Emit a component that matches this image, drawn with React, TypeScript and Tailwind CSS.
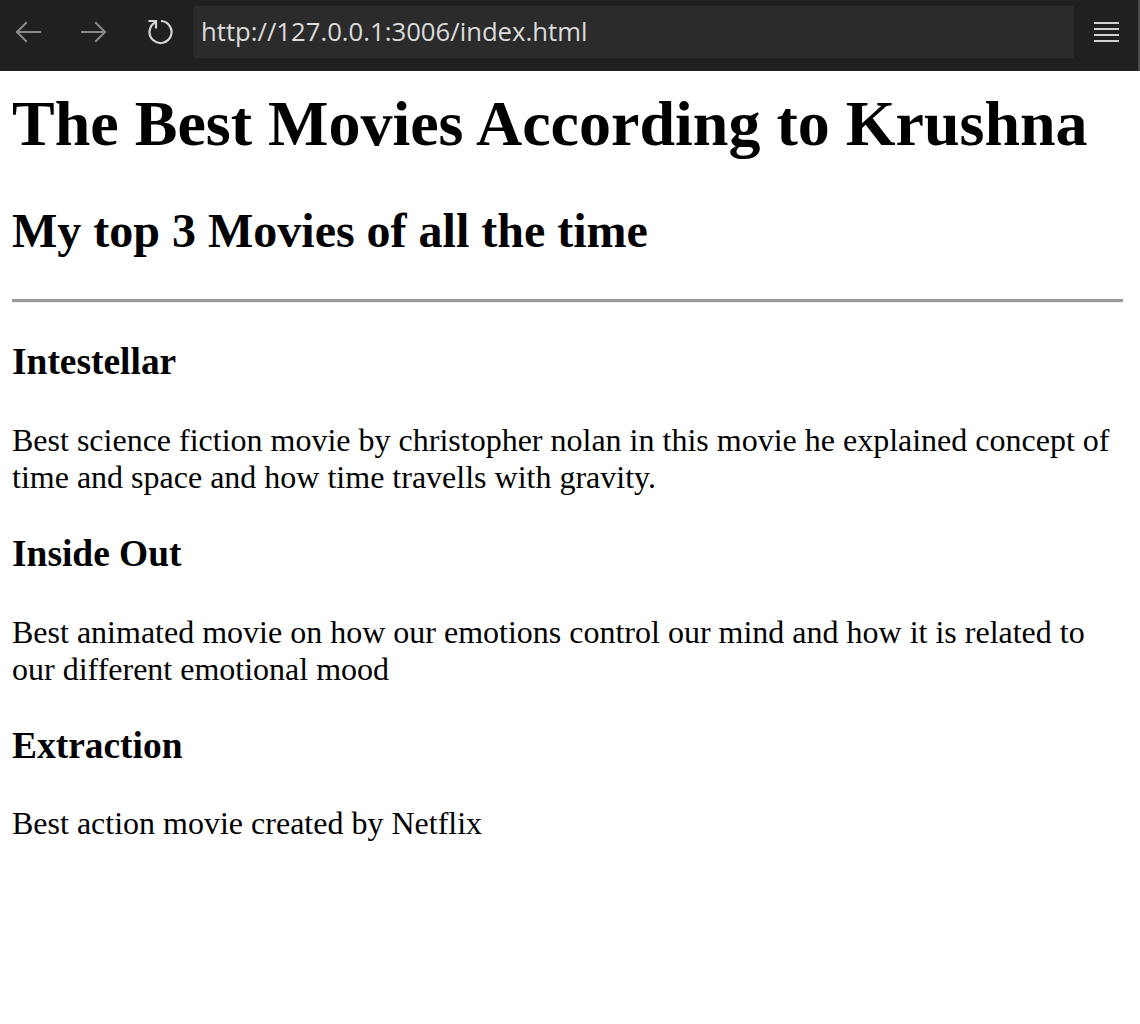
import React from "react";

function Back() {
  return (
    <svg width="26" height="22" viewBox="0 0 26 22" fill="none" stroke="#8a8a8a" strokeWidth="2" strokeLinecap="square">
      <path d="M2 11 H25" />
      <path d="M11 2 L2 11 L11 20" />
    </svg>
  );
}

function Forward() {
  return (
    <svg width="26" height="22" viewBox="0 0 26 22" fill="none" stroke="#8a8a8a" strokeWidth="2" strokeLinecap="square">
      <path d="M1 11 H24" />
      <path d="M15 2 L24 11 L15 20" />
    </svg>
  );
}

function Reload() {
  return (
    <svg width="28" height="28" viewBox="0 0 28 28" fill="none" stroke="#d4d4d4" strokeWidth="2.2">
      <path d="M9.5 4.2 A11 11 0 1 0 15 3" />
      <path d="M3.5 3 H10 V9.5" strokeLinecap="square" />
    </svg>
  );
}

export default function App() {
  return (
    <div className="min-h-[1024px] bg-white">
      <div className="flex h-[71px] items-start bg-[#202020]">
        <div className="flex h-[64px] w-[193px] items-center">
          <div className="ml-[15px] flex w-[26px] items-center">
            <Back />
          </div>
          <div className="ml-[40px] flex w-[26px] items-center">
            <Forward />
          </div>
          <div className="ml-[39px] flex items-center">
            <Reload />
          </div>
        </div>
        <div
          className="mt-[6px] flex h-[52px] w-[881px] items-center bg-[#2b2b2b] pl-[8px] text-[25.7px] text-[#dcdcdc]"
          style={{ fontFamily: "'Open Sans', 'Liberation Sans', sans-serif" }}
        >
          http://127.0.0.1:3006/index.html
        </div>
        <div className="ml-[20px] mt-[22px] flex w-[25px] flex-col gap-[4px]">
          <div className="h-[2px] bg-[#d0d0d0]" />
          <div className="h-[2px] bg-[#d0d0d0]" />
          <div className="h-[2px] bg-[#d0d0d0]" />
          <div className="h-[2px] bg-[#d0d0d0]" />
        </div>
        <div className="ml-auto h-full w-[2px] bg-[#4a4a4a]" />
      </div>

      <div
        className="flex flex-col pl-[12px] pr-[17px] text-black"
        style={{ fontFamily: "'Liberation Serif', 'Times New Roman', serif" }}
      >
        <h1 className="mt-[16px] text-[64px] font-bold leading-[74px]">
          The Best Movies According to Krushna
        </h1>
        <h2 className="mt-[42px] text-[48px] font-bold leading-[55px]">
          My top 3 Movies of all the time
        </h2>
        <hr className="mt-[41px] border-t-[3px] border-b border-t-[#9a9a9a] border-b-[#eeeeee]" />
        <h3 className="mt-[37px] text-[37.44px] font-bold leading-[43px]">Intestellar</h3>
        <p className="mt-[39px] text-[32px] leading-[37px]">
          Best science fiction movie by christopher nolan in this movie he explained concept of time and space and how time travells with gravity.
        </p>
        <h3 className="mt-[36px] text-[37.44px] font-bold leading-[43px]">Inside Out</h3>
        <p className="mt-[39px] text-[32px] leading-[37px]">
          Best animated movie on how our emotions control our mind and how it is related to our different emotional mood
        </p>
        <h3 className="mt-[36px] text-[37.44px] font-bold leading-[43px]">Extraction</h3>
        <p className="mt-[38px] text-[32px] leading-[37px]">Best action movie created by Netflix</p>
      </div>
    </div>
  );
}
